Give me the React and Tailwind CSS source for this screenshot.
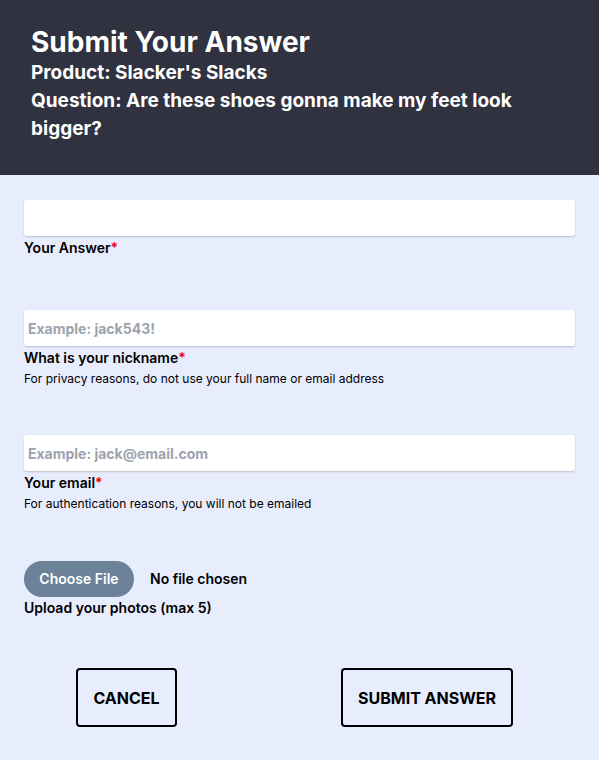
import React from 'react';

const fields = [
  { label: 'Your Answer', placeholder: '', help: '', mb: 'mb-[52px]' },
  { label: 'What is your nickname', placeholder: 'Example: jack543!', help: 'For privacy reasons, do not use your full name or email address', mb: 'mb-[47px]' },
  { label: 'Your email', placeholder: 'Example: jack@email.com', help: 'For authentication reasons, you will not be emailed', mb: 'mb-[48px]' },
];

export default function App() {
  return (
    <div className="w-[599px] h-[760px] bg-[#e8edfd] font-['Inter',sans-serif] overflow-hidden">
      {/* Header */}
      <div className="bg-[#30323f] text-white px-[31px] pt-[25px] pb-[32px]">
        <h1 className="text-[28px] leading-[34px] font-bold">Submit Your Answer</h1>
        <p className="text-[19px] leading-[28px] font-bold">Product: Slacker's Slacks</p>
        <p className="text-[19px] leading-[28px] font-bold pr-[10px]">Question: Are these shoes gonna make my feet look bigger?</p>
      </div>

      {/* Form */}
      <div className="px-6 pt-[25px]">
        {fields.map((f, i) => (
          <div key={i} className={f.mb}>
            <input
              className="w-full h-9 bg-white rounded-[3px] shadow-[0_1px_2px_rgba(0,0,0,0.2)] px-1 text-sm font-bold placeholder:text-[#9ca3af] outline-none"
              placeholder={f.placeholder}
            />
            <div className="text-sm leading-5 font-semibold text-black mt-[2px]">
              {f.label}<span className="text-red-600">*</span>
            </div>
            {f.help && <div className="text-xs leading-[18px] text-black mt-[2px]">{f.help}</div>}
          </div>
        ))}

        <div className="flex items-center gap-4">
          <div className="w-[110px] h-9 rounded-full bg-[#6b8298] text-white text-sm font-semibold flex items-center justify-center">Choose File</div>
          <span className="text-sm font-semibold text-black">No file chosen</span>
        </div>
        <div className="text-sm leading-5 font-semibold text-black mt-px">Upload your photos (max 5)</div>

        <div className="flex mt-[50px] pl-[52px] gap-[164px]">
          <button className="w-[101px] h-[59px] border-2 border-black rounded-[4px] text-base font-bold text-black">CANCEL</button>
          <button className="w-[172px] h-[59px] border-2 border-black rounded-[4px] text-base font-bold text-black">SUBMIT ANSWER</button>
        </div>
      </div>
    </div>
  );
}
